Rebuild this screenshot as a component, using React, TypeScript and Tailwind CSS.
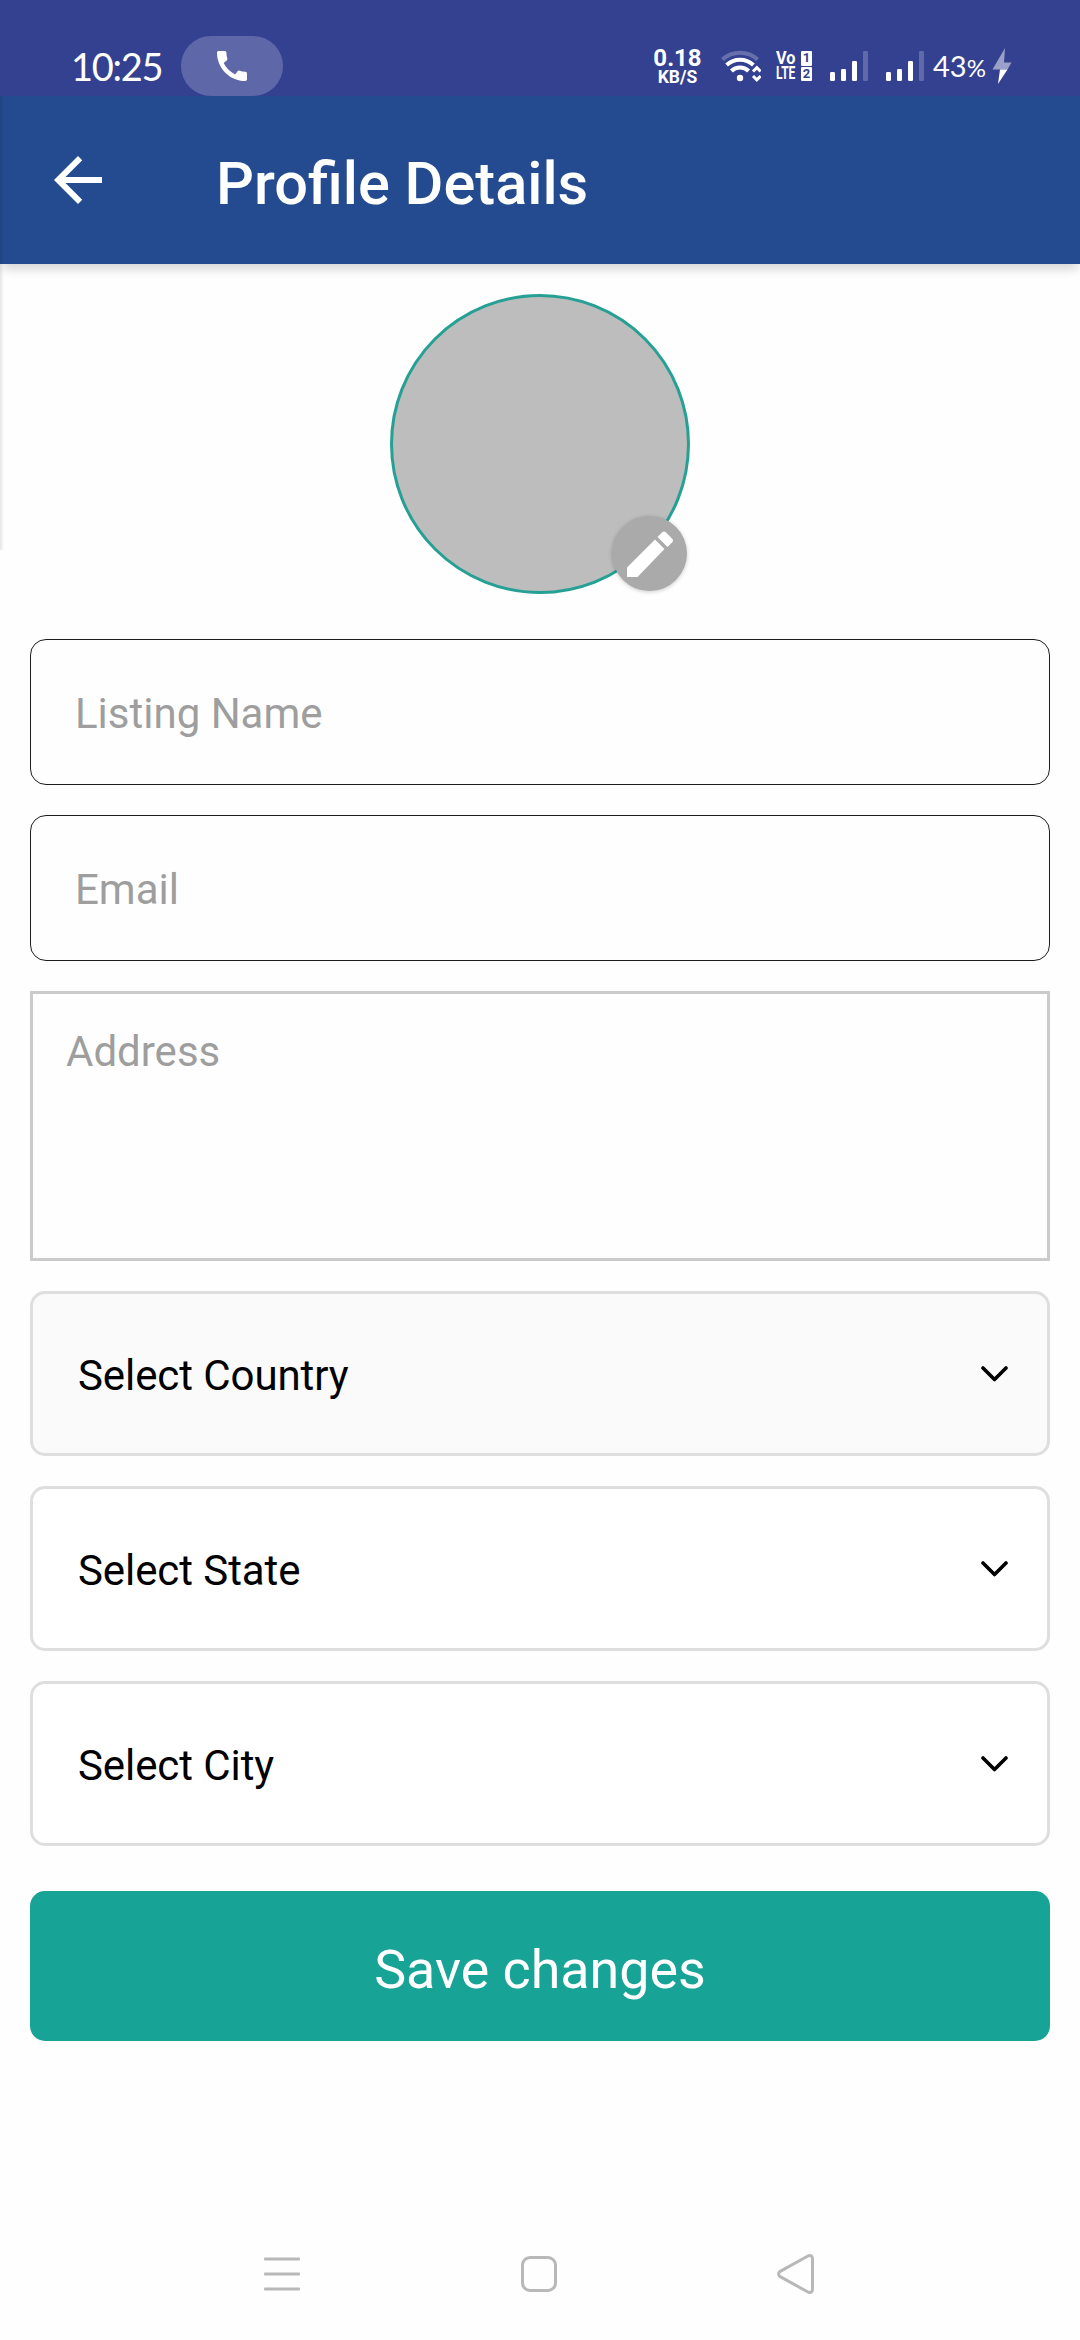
import React from "react";

function SignalBars() {
  return (
    <svg className="block h-[30px] w-[38px] shrink-0" viewBox="0 0 38 30" fill="#fff">
      <rect x="0" y="21" width="5" height="9" rx="1.2" />
      <rect x="11" y="18" width="5" height="12" rx="1.2" />
      <rect x="22" y="10" width="5" height="20" rx="1.2" />
      <rect x="33" y="0" width="5" height="30" rx="1.2" opacity="0.22" />
    </svg>
  );
}

function WifiIcon() {
  return (
    <svg className="block h-[32px] w-[40px] shrink-0" viewBox="0 0 40 32" fill="none" stroke="#fff" strokeWidth="4">
      <path d="M1.4 9.6C11.5 0.6 26.5 0.6 36.6 9.6" opacity="0.25" />
      <path d="M5.6 15C13.3 8 24.7 8 32.4 15" />
      <path d="M10.4 21C15.2 16.4 22.8 16.4 27.6 21" />
      <circle cx="19" cy="28" r="3.2" fill="#fff" stroke="none" />
      <path d="M32 21.5l3.800-3.800 3.800 3.800M32 26l3.800 3.800 3.800-3.800" strokeWidth="3" />
    </svg>
  );
}

function VolteRow({ label, sim, wide = false }: { label: string; sim: string; wide?: boolean }) {
  return (
    <div className="flex h-[15.5px] items-center justify-between">
      <span className="flex w-[22px]">
        <span className={`origin-left whitespace-nowrap text-[18.5px] font-bold leading-[15px] ${wide ? "scale-x-[0.88]" : "scale-x-[0.65]"}`}>{label}</span>
      </span>
      <span className="flex h-[14.5px] w-[11px] shrink-0 items-center justify-center rounded-[1px] bg-white text-[13px] font-bold leading-[14px] text-[#344191]">
        {sim}
      </span>
    </div>
  );
}

function StatusBar() {
  return (
    <div className="flex h-24 items-start bg-[#344191] text-white">
      <div className="ml-[71px] mt-[42px] w-[110px] whitespace-nowrap font-['Lato'] text-[38px] leading-[48px] tracking-[-1.3px]">10:25</div>
      <div className="mt-9 flex h-[60px] w-[102px] items-center justify-center rounded-full bg-[#5e68a8]">
        <svg className="h-10 w-10" viewBox="0 0 24 24" fill="#fff">
          <path d="M20.01 15.38c-1.23 0-2.42-.2-3.53-.56-.35-.12-.74-.03-1.01.24l-1.57 1.97c-2.83-1.35-5.48-3.9-6.89-6.83l1.95-1.66c.27-.28.35-.67.24-1.02-.37-1.11-.56-2.3-.56-3.53 0-.54-.45-.99-.99-.99H4.19C3.65 3 3 3.24 3 3.99 3 13.28 10.73 21 20.01 21c.71 0 .99-.63.99-1.18v-3.45c0-.54-.45-.99-.99-.99z" />
        </svg>
      </div>
      <div className="ml-[369px] mt-[46px] flex w-[51px] flex-col items-center whitespace-nowrap font-bold">
        <span className="text-[24px] leading-[24px]">0.18</span>
        <span className="text-[17.5px] leading-[14px]">KB/S</span>
      </div>
      <div className="ml-[18px] mt-[50px]">
        <WifiIcon />
      </div>
      <div className="ml-[15px] mt-[50.5px] flex w-9 flex-col">
        <VolteRow label="Vo" sim="1" wide />
        <VolteRow label="LTE" sim="2" />
      </div>
      <div className="ml-[18px] mt-[51px]">
        <SignalBars />
      </div>
      <div className="ml-[18px] mt-[51px]">
        <SignalBars />
      </div>
      <div className="ml-[9px] mt-[48px] w-[59px] whitespace-nowrap font-['Lato'] text-[29px] leading-[36px]">
        43<span className="text-[24px]">%</span>
      </div>
      <svg className="mt-[48px] h-9 w-5" viewBox="0 0 20 36" fill="#fff">
        <path d="M13 0L0.500 21.500H15.500L19.500 14.500H12Z" opacity="0.5" />
        <path d="M0.500 21.500H8L6 36L15.500 21.500Z" />
      </svg>
    </div>
  );
}

function Header() {
  return (
    <div className="relative z-10 flex h-[168px] items-center bg-[#244b8f] text-white shadow-[0_7px_10px_-2px_rgba(0,0,0,0.16)]">
      <svg className="ml-[42px] h-[72px] w-[72px]" viewBox="0 0 24 24" fill="#fff">
        <path d="M20 11H7.83l5.590-5.590L12 4l-8 8 8 8 1.410-1.410L7.830 13H20v-2z" />
      </svg>
      <h1 className="ml-[102px] pt-2 text-[59.5px] font-medium leading-[72px]">Profile Details</h1>
    </div>
  );
}

function Avatar() {
  return (
    <div className="relative mx-auto mt-[30px] h-[300px] w-[300px] rounded-full border-[3px] border-[#26a095] bg-[#bdbdbd]">
      <div className="absolute bottom-0 right-0 flex h-[75px] w-[75px] items-center justify-center rounded-full bg-[#aaaaaa] shadow-[0_1px_4px_rgba(0,0,0,0.2)]">
        <svg className="h-[46px] w-[46px]" viewBox="0 0 46 46" fill="#fff">
          <path d="M0 36.500L28 8.500L37.500 18L10.500 46H0Z" />
          <path d="M30.500 6L35 1.500Q37 -0.500 39 1.500L45 7.500Q47 9.500 45 11.500L40.500 16Z" />
        </svg>
      </div>
    </div>
  );
}

function TextField({ label }: { label: string }) {
  return (
    <div className="flex h-[146px] items-center rounded-[16px] border border-[#1c1c1c] pl-11 pt-1 text-[42px] leading-[50px] text-[#9e9e9e]">
      {label}
    </div>
  );
}

function SelectField({ label, filled = false }: { label: string; filled?: boolean }) {
  return (
    <div className={`flex h-[165px] items-center justify-between rounded-[15px] border-[3px] border-[#dedede] pl-[45px] pr-[39px] text-black ${filled ? "bg-[#fafafa]" : "bg-white"}`}>
      <span className="pt-1 text-[42px] leading-[50px] tracking-[-0.08px]">{label}</span>
      <svg className="h-[16px] w-[27px]" viewBox="0 0 27 16" fill="none" stroke="#000" strokeWidth="3.6" strokeLinecap="round" strokeLinejoin="round">
        <path d="M2 2L13.500 13.500L25 2" />
      </svg>
    </div>
  );
}

function NavBar() {
  return (
    <div className="mt-auto flex h-[132px] items-center justify-between pl-[264px] pr-[266px]">
      <svg className="h-10 w-9" viewBox="0 0 36 40" fill="#b8b8b8">
        <rect y="3.500" width="36" height="3" rx="1" />
        <rect y="18.500" width="36" height="3" rx="1" />
        <rect y="33.500" width="36" height="3" rx="1" />
      </svg>
      <div className="h-9 w-9 rounded-[9px] border-[3px] border-[#b8b8b8]" />
      <svg className="h-10 w-[37px]" viewBox="0 0 37 40" fill="none" stroke="#b8b8b8" strokeWidth="3" strokeLinejoin="round">
        <path d="M2.700 17.600L30.500 2.200Q35.500 0.200 35.500 5V35Q35.500 39.800 30.500 37.800L2.700 22.400Q0.500 20 2.700 17.600Z" />
      </svg>
    </div>
  );
}

export default function App() {
  return (
    <div className="relative flex h-[2340px] w-[1080px] flex-col overflow-hidden bg-[#fefefe] font-['Roboto',sans-serif]">
      <StatusBar />
      <Header />
      <Avatar />
      <div className="mx-[30px] mt-[45px] flex flex-col gap-[30px]">
        <TextField label="Listing Name" />
        <TextField label="Email" />
        <div className="h-[270px] border-[3px] border-[#cbcbcb] pl-[33px] pt-[33px] text-[42px] leading-[50px] text-[#9e9e9e]">Address</div>
        <SelectField label="Select Country" filled />
        <SelectField label="Select State" />
        <SelectField label="Select City" />
        <button className="mt-[15px] flex h-[150px] items-center justify-center rounded-[15px] bg-[#18a397] pt-2 text-[53.8px] leading-[64px] text-white">Save changes</button>
      </div>
      <NavBar />
      <div className="absolute left-0 top-24 z-20 h-[454px] w-[4px] bg-linear-to-r from-black/10 to-transparent" />
    </div>
  );
}
